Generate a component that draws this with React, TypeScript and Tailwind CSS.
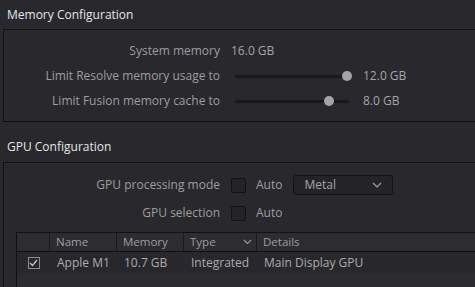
import React from "react";

function Slider({ thumb }: { thumb: number }) {
  return (
    <div className="relative h-[10px] w-[114px] ml-[4px]">
      <div className="absolute left-0 right-0 top-[4px] h-[3px] rounded-full bg-[#19191b]" />
      <div
        className="absolute top-[0px] h-[10px] w-[10px] rounded-full bg-[#a4a4a6]"
        style={{ left: thumb - 5 }}
      />
    </div>
  );
}

function Check() {
  return <div className="h-[15px] w-[15px] rounded-[2px] border border-[#121214] bg-[#242428]" />;
}

export default function App() {
  return (
    <div
      className="w-[475px] h-[287px] overflow-hidden bg-[#28282d] text-[12px] text-[#9e9e9f]"
      style={{ fontFamily: '"Open Sans", "Liberation Sans", sans-serif' }}
    >
      <div className="h-[29px] flex items-center pl-[7px] text-[12px] text-[#e6e6e7]">
        Memory Configuration
      </div>
      <div className="ml-[3px] border-l border-t border-b border-[#111113] pt-[8px] pb-[8px]">
        <div className="flex items-center h-[25px]">
          <div className="w-[216px] text-right">System memory</div>
          <div className="ml-[11px] text-[#a6a6a7]">16.0 GB</div>
        </div>
        <div className="flex items-center h-[25px]">
          <div className="w-[216px] text-right">Limit Resolve memory usage to</div>
          <div className="ml-[11px]">
            <Slider thumb={112} />
          </div>
          <div className="ml-[14px] text-[#a6a6a7]">12.0 GB</div>
        </div>
        <div className="flex items-center h-[25px]">
          <div className="w-[216px] text-right">Limit Fusion memory cache to</div>
          <div className="ml-[11px]">
            <Slider thumb={94} />
          </div>
          <div className="ml-[14px] text-[#a6a6a7]">8.0 GB</div>
        </div>
      </div>
      <div className="h-[40px] pt-[10px] flex items-center pl-[7px] text-[12px] text-[#e6e6e7]">
        GPU Configuration
      </div>
      <div className="ml-[3px] border-l border-t border-[#111113] pt-[8px] h-[200px]">
        <div className="flex items-center h-[28px]">
          <div className="w-[216px] text-right">GPU processing mode</div>
          <div className="ml-[11px]">
            <Check />
          </div>
          <div className="ml-[10px]">Auto</div>
          <div className="ml-[11px] flex items-center h-[20px] w-[100px] rounded-[3px] border border-[#121214] bg-[#242428] pl-[10px]">
            <span className="text-[#a6a6a7]">Metal</span>
            <svg className="ml-auto mr-[10px]" width="10" height="6" viewBox="0 0 10 6">
              <path d="M1 1 L5 5 L9 1" fill="none" stroke="#a0a0a2" strokeWidth="1.2" />
            </svg>
          </div>
        </div>
        <div className="flex items-center h-[28px]">
          <div className="w-[216px] text-right">GPU selection</div>
          <div className="ml-[11px]">
            <Check />
          </div>
          <div className="ml-[10px]">Auto</div>
        </div>
        <div className="ml-[12px] mt-[5px] border-l border-t border-[#111113]">
          <div className="flex h-[19px] bg-[#2c2c31] border-b border-[#111113] text-[11.5px]">
            <div className="w-[33px] border-r border-[#1a1a1d]" />
            <div className="w-[67px] border-r border-[#1a1a1d] pl-[6px] flex items-center">Name</div>
            <div className="w-[67px] border-r border-[#1a1a1d] pl-[6px] flex items-center">Memory</div>
            <div className="w-[73px] border-r border-[#1a1a1d] pl-[6px] flex items-center">
              <span>Type</span>
              <svg className="ml-auto mr-[4px]" width="9" height="6" viewBox="0 0 9 6">
                <path d="M1 1 L4.5 4.5 L8 1" fill="none" stroke="#9a9a9c" strokeWidth="1.1" />
              </svg>
            </div>
            <div className="flex-1 pl-[6px] flex items-center">Details</div>
          </div>
          <div className="flex h-[21px] items-center bg-[#27272c] text-[#acacad]">
            <div className="w-[33px] flex justify-center">
              <div className="h-[12px] w-[12px] border border-[#8e8e90] flex items-center justify-center">
                <svg width="9" height="8" viewBox="0 0 9 8">
                  <path d="M1 4 L3.5 6.5 L8 1" fill="none" stroke="#c4c4c6" strokeWidth="1.3" />
                </svg>
              </div>
            </div>
            <div className="w-[67px] pl-[7px]">Apple M1</div>
            <div className="w-[67px] pl-[7px]">10.7 GB</div>
            <div className="w-[73px] pl-[7px]">Integrated</div>
            <div className="flex-1 pl-[7px]">Main Display GPU</div>
          </div>
          <div className="h-[40px] bg-[#2b2b30]" />
        </div>
      </div>
    </div>
  );
}
